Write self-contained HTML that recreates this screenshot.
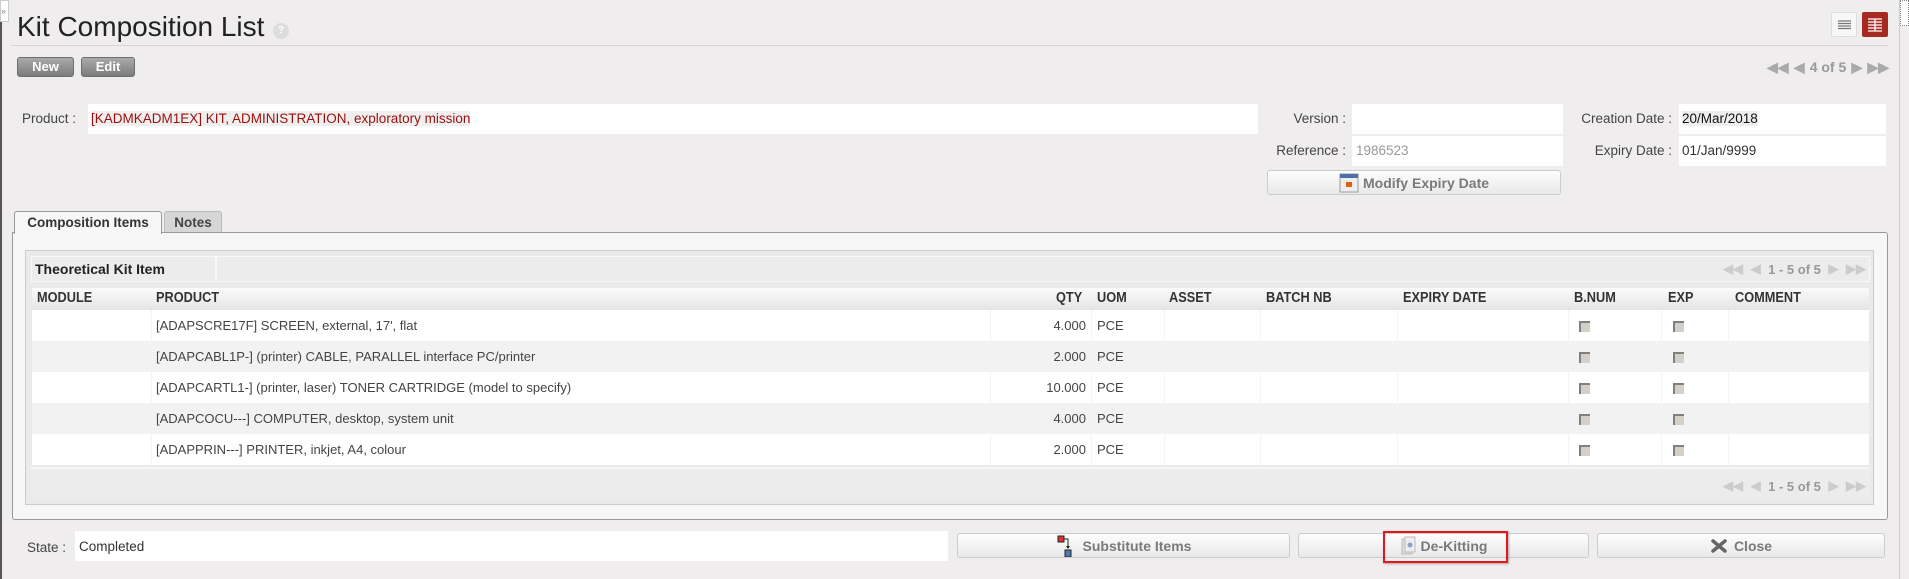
<!DOCTYPE html>
<html><head><meta charset="utf-8"><style>
*{margin:0;padding:0;box-sizing:border-box}
body{width:1909px;height:579px;background:#efeded;font-family:"Liberation Sans",Arial,sans-serif;font-size:13px;color:#333;position:relative;overflow:hidden}
.a{position:absolute}
.lbl{position:absolute;color:#444;font-size:13.5px;text-align:right}
.inp{position:absolute;background:#fff}
.btn{position:absolute;border:1px solid #ccc;border-radius:3px;background:linear-gradient(#fdfdfd,#e9e9e9);color:#7a7a7a;font-weight:bold;font-size:14px;display:flex;align-items:center;justify-content:center}
.gb{position:absolute;border:1px solid #6f6f6f;border-radius:3px;background:linear-gradient(#a9a9a9,#7c7c7c);color:#fff;font-weight:bold;font-size:13px;text-align:center;line-height:18px}
.hd{font-family:"Liberation Sans Narrow","Liberation Sans",sans-serif;font-weight:bold;font-size:14.5px;color:#333;transform:scaleX(0.88);transform-origin:left top;white-space:nowrap}
.row{position:absolute;left:32px;width:1837px;height:31px}
.cell{position:absolute;top:0;height:31px;line-height:31px;font-size:13px;color:#444}
.sep{position:absolute;width:1px;background:#f3f3f3}
.cb{position:absolute;width:11px;height:11px;background:#d4d0c8;border-top:2px solid #808080;border-left:2px solid #808080}
.pg{color:#aaa;font-weight:bold;font-size:14px}
</style></head><body>
<div class="a" style="left:0;top:0;width:2px;height:579px;background:#555"></div>
<div class="a" style="left:0;top:0;width:9px;height:22px;background:#fff;border:1px solid #ccc;font-size:9px;color:#888;line-height:20px">»</div>
<div class="a" style="left:1899px;top:0;width:1px;height:579px;background:#ccc"></div>
<div class="a" style="left:1900px;top:0;width:9px;height:26px;background:#fff;border:1px dotted #888"></div>

<div class="a" style="left:17px;top:11px;font-size:28px;color:#222">Kit Composition List</div>
<div class="a" style="left:273px;top:23px;width:16px;height:16px;border-radius:8px;background:#ddd;color:#fff;font-size:10px;text-align:center;line-height:16px;font-weight:bold">?</div>
<div class="a" style="left:11px;top:45px;width:1877px;height:1px;background:#d6d6d6"></div>

<div class="a" style="left:1831px;top:12px;width:26px;height:25px;border:1px solid #ddd;border-radius:2px;background:#f7f7f7"><svg width="24" height="23"><g stroke="#777" stroke-width="1.3"><path d="M6 8h13M6 10.5h13M6 13h13M6 15.5h13"/></g></svg></div>
<div class="a" style="left:1862px;top:12px;width:26px;height:25px;border-radius:2px;background:#a72a22"><svg width="26" height="25"><g stroke="#fff" stroke-width="1.3"><path d="M6 7h14M6 10h14M6 13h14M6 16h14M6 19h14M13 7v12"/></g></svg></div>

<div class="gb" style="left:17px;top:57px;width:57px;height:20px">New</div>
<div class="gb" style="left:81px;top:57px;width:54px;height:20px">Edit</div>

<div class="a pg" style="left:1767px;top:58px;width:122px;height:18px;display:flex;justify-content:space-between;align-items:center"><span>&#9664;&#9664;</span><span>&#9664;</span><span style="color:#999">4 of 5</span><span>&#9654;</span><span>&#9654;&#9654;</span></div>

<div class="lbl" style="left:22px;top:111px;text-align:left">Product :</div>
<div class="inp" style="left:88px;top:104px;width:1170px;height:30px"><span class="a" style="left:3px;top:7px;color:#9a1010;font-size:13.5px;background:#f1eeee">[KADMKADM1EX] KIT, ADMINISTRATION, exploratory mission</span></div>
<div class="lbl" style="left:1200px;top:111px;width:146px">Version :</div>
<div class="inp" style="left:1352px;top:104px;width:211px;height:30px"></div>
<div class="lbl" style="left:1500px;top:111px;width:172px">Creation Date :</div>
<div class="inp" style="left:1679px;top:104px;width:207px;height:30px"><span class="a" style="left:3px;top:7px;color:#111;font-size:13.5px;background:#eee">20/Mar/2018</span></div>
<div class="lbl" style="left:1200px;top:143px;width:146px">Reference :</div>
<div class="inp" style="left:1352px;top:136px;width:211px;height:30px"><span class="a" style="left:4px;top:7px;color:#999;font-size:13.5px">1986523</span></div>
<div class="lbl" style="left:1500px;top:143px;width:172px">Expiry Date :</div>
<div class="inp" style="left:1679px;top:136px;width:207px;height:30px"><span class="a" style="left:3px;top:7px;color:#333;font-size:13.5px">01/Jan/9999</span></div>

<div class="btn" style="left:1267px;top:170px;width:294px;height:25px"><svg width="20" height="20" style="margin-right:4px"><rect x="1" y="1" width="18" height="18" fill="#eee" stroke="#999"/><rect x="1" y="1" width="18" height="4" fill="#4b6fa8"/><rect x="7" y="9" width="6" height="5" fill="#e06010"/></svg>Modify Expiry Date</div>

<div class="a" style="left:12px;top:232px;width:1876px;height:288px;border:1px solid #999;border-radius:0 3px 3px 3px;background:#f7f7f7"></div>
<div class="a" style="left:14px;top:211px;width:148px;height:23px;background:#f7f7f7;border:1px solid #999;border-bottom:none;border-radius:3px 3px 0 0;font-weight:bold;color:#333;font-size:13.5px;text-align:center;line-height:22px">Composition Items</div>
<div class="a" style="left:164px;top:211px;width:58px;height:21px;background:#d6d6d6;border:1px solid #bbb;border-bottom:none;border-radius:3px 3px 0 0;font-weight:bold;color:#444;font-size:13.5px;text-align:center;line-height:21px">Notes</div>

<div class="a" style="left:25px;top:250px;width:1849px;height:255px;border:1px solid #ccc;background:#eaeaea"></div>
<div class="a" style="left:31px;top:256px;width:1839px;height:26px;background:#ececec;border:1px solid #f8f8f8"></div>
<div class="a" style="left:215px;top:256px;width:2px;height:26px;background:#f8f8f8"></div>
<div class="a" style="left:35px;top:261px;font-weight:bold;font-size:14px;color:#222">Theoretical Kit Item</div>
<div class="a pg" style="left:1723px;top:260px;width:143px;height:18px;display:flex;justify-content:space-between;align-items:center;color:#ccc;font-size:13px"><span>&#9664;&#9664;</span><span>&#9664;</span><span style="color:#999">1 - 5 of 5</span><span>&#9654;</span><span>&#9654;&#9654;</span></div>

<div class="row" style="top:288px;height:22px;background:linear-gradient(#fbfbfb,#e4e4e4)">
<span class="a hd" style="left:5px;top:2px">MODULE</span>
<span class="a hd" style="left:124px;top:2px">PRODUCT</span>
<span class="a hd" style="left:1024px;top:2px">QTY</span>
<span class="a hd" style="left:1065px;top:2px">UOM</span>
<span class="a hd" style="left:1137px;top:2px">ASSET</span>
<span class="a hd" style="left:1234px;top:2px">BATCH NB</span>
<span class="a hd" style="left:1371px;top:2px">EXPIRY DATE</span>
<span class="a hd" style="left:1542px;top:2px">B.NUM</span>
<span class="a hd" style="left:1636px;top:2px">EXP</span>
<span class="a hd" style="left:1703px;top:2px">COMMENT</span>
</div>

<div class="row" style="top:310px;background:#fff"><span class="cell" style="left:124px">[ADAPSCRE17F] SCREEN, external, 17', flat</span><span class="cell" style="left:900px;width:154px;text-align:right">4.000</span><span class="cell" style="left:1065px">PCE</span><div class="cb" style="left:1547px;top:11px"></div><div class="cb" style="left:1641px;top:11px"></div></div>
<div class="row" style="top:341px;background:#f2f2f2"><span class="cell" style="left:124px">[ADAPCABL1P-] (printer) CABLE, PARALLEL interface PC/printer</span><span class="cell" style="left:900px;width:154px;text-align:right">2.000</span><span class="cell" style="left:1065px">PCE</span><div class="cb" style="left:1547px;top:11px"></div><div class="cb" style="left:1641px;top:11px"></div></div>
<div class="row" style="top:372px;background:#fff"><span class="cell" style="left:124px">[ADAPCARTL1-] (printer, laser) TONER CARTRIDGE (model to specify)</span><span class="cell" style="left:900px;width:154px;text-align:right">10.000</span><span class="cell" style="left:1065px">PCE</span><div class="cb" style="left:1547px;top:11px"></div><div class="cb" style="left:1641px;top:11px"></div></div>
<div class="row" style="top:403px;background:#f2f2f2"><span class="cell" style="left:124px">[ADAPCOCU---] COMPUTER, desktop, system unit</span><span class="cell" style="left:900px;width:154px;text-align:right">4.000</span><span class="cell" style="left:1065px">PCE</span><div class="cb" style="left:1547px;top:11px"></div><div class="cb" style="left:1641px;top:11px"></div></div>
<div class="row" style="top:434px;background:#fff"><span class="cell" style="left:124px">[ADAPPRIN---] PRINTER, inkjet, A4, colour</span><span class="cell" style="left:900px;width:154px;text-align:right">2.000</span><span class="cell" style="left:1065px">PCE</span><div class="cb" style="left:1547px;top:11px"></div><div class="cb" style="left:1641px;top:11px"></div></div>

<div class="sep" style="left:151px;top:310px;height:155px"></div>
<div class="sep" style="left:990px;top:310px;height:155px"></div>
<div class="sep" style="left:1091px;top:310px;height:155px"></div>
<div class="sep" style="left:1164px;top:310px;height:155px"></div>
<div class="sep" style="left:1260px;top:310px;height:155px"></div>
<div class="sep" style="left:1397px;top:310px;height:155px"></div>
<div class="sep" style="left:1568px;top:310px;height:155px"></div>
<div class="sep" style="left:1661px;top:310px;height:155px"></div>
<div class="sep" style="left:1728px;top:310px;height:155px"></div>

<div class="a" style="left:31px;top:467px;width:1839px;height:34px;background:#ececec;border-top:2px solid #f6f6f6"></div>
<div class="a pg" style="left:1723px;top:477px;width:143px;height:18px;display:flex;justify-content:space-between;align-items:center;color:#ccc;font-size:13px"><span>&#9664;&#9664;</span><span>&#9664;</span><span style="color:#999">1 - 5 of 5</span><span>&#9654;</span><span>&#9654;&#9654;</span></div>

<div class="lbl" style="left:27px;top:540px;text-align:left">State :</div>
<div class="inp" style="left:75px;top:531px;width:873px;height:30px"><span class="a" style="left:4px;top:8px;color:#333;font-size:13.5px">Completed</span></div>
<div class="btn" style="left:957px;top:533px;width:333px;height:25px"><svg width="22" height="22" style="margin-right:5px"><rect x="2" y="1" width="6" height="6" fill="#d33" stroke="#222"/><path d="M8 4h4v8" stroke="#222" fill="none"/><path d="M10 11l2 3 2-3z" fill="#222"/><rect x="9" y="15" width="6" height="7" fill="#4a7ab0" stroke="#222"/></svg>Substitute Items</div>
<div class="btn" style="left:1298px;top:533px;width:291px;height:25px"><svg width="18" height="20" style="margin-right:3px"><rect x="2" y="3" width="10" height="15" fill="#ddd" stroke="#bbb"/><rect x="5" y="1" width="10" height="15" fill="#eee" stroke="#bbb"/><circle cx="10" cy="9" r="2.5" fill="#8aa4c8"/></svg>De-Kitting</div>
<div class="a" style="left:1383px;top:531px;width:125px;height:32px;border:2px solid #e8141b;box-shadow:1px 1px 2px rgba(0,0,0,.3)"></div>
<div class="btn" style="left:1597px;top:533px;width:288px;height:25px"><svg width="18" height="16" style="margin-right:6px"><path d="M3 3l12 10M15 3L3 13" stroke="#666" stroke-width="3.5" stroke-linecap="round"/></svg>Close</div>
</body></html>
